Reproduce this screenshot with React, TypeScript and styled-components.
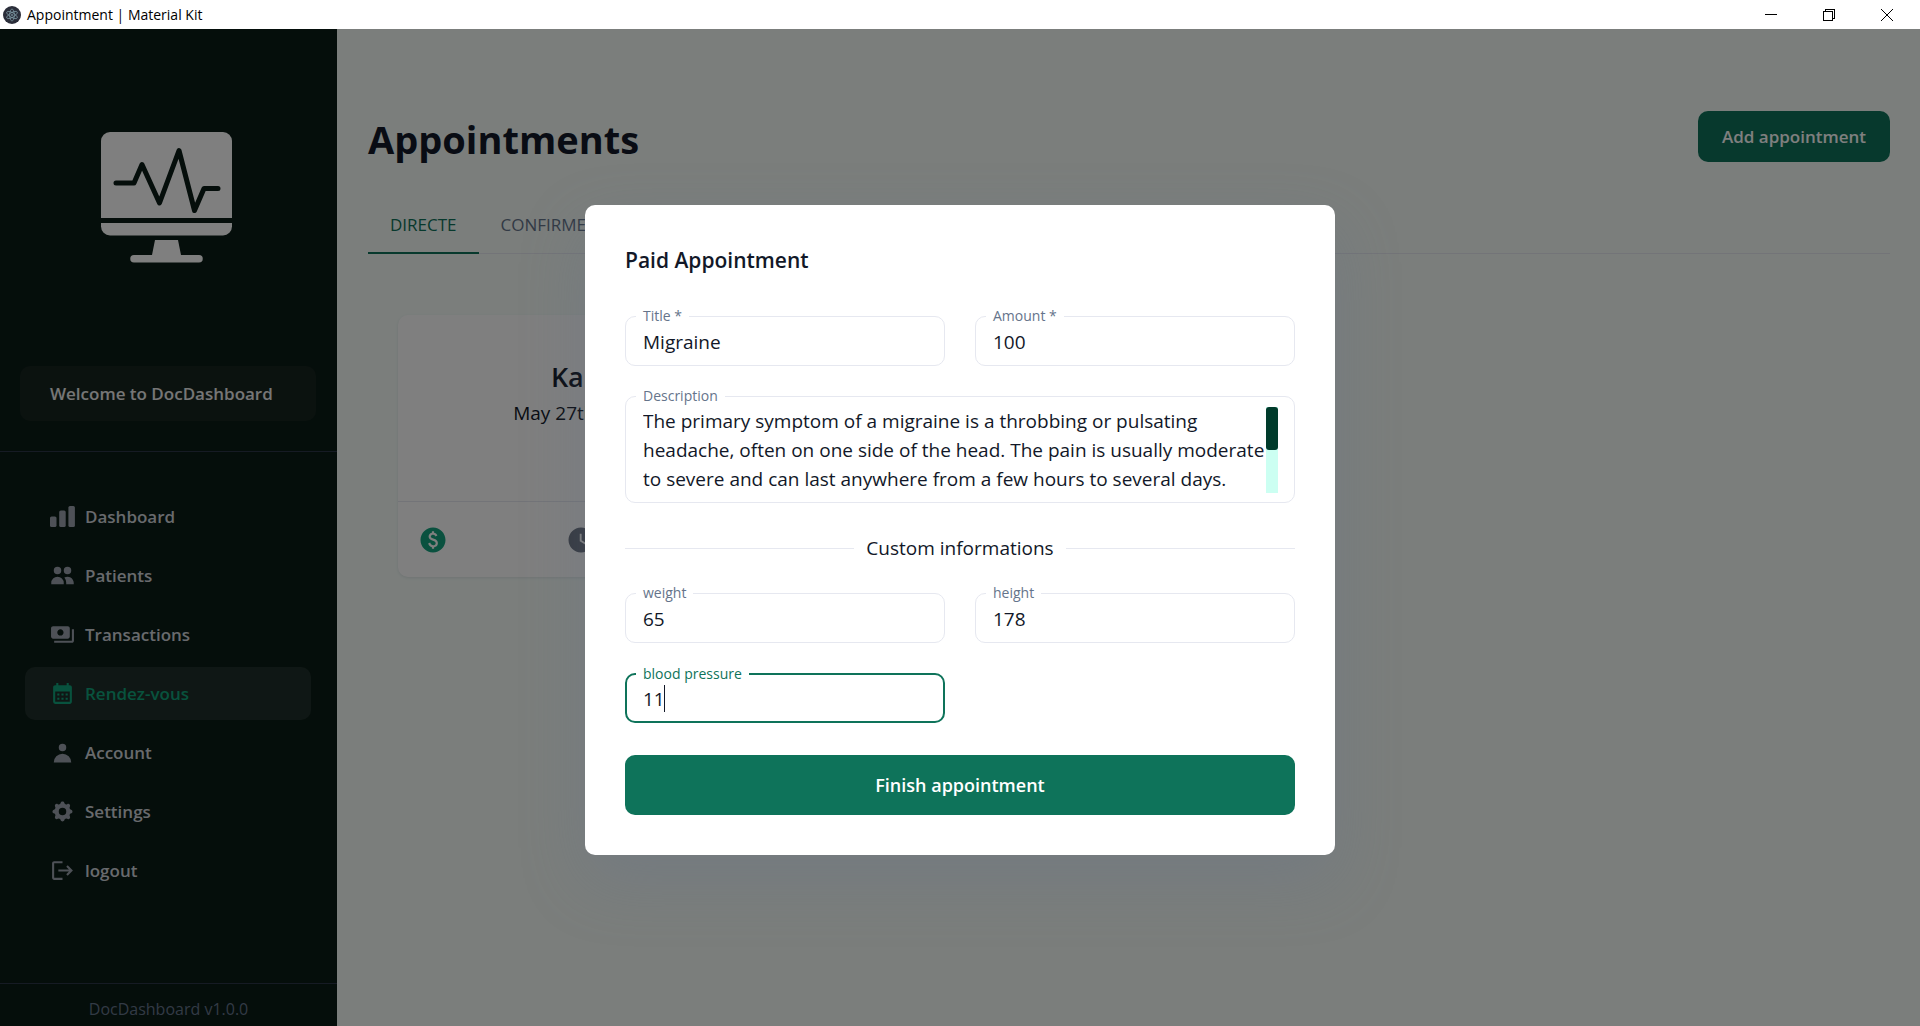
import React from 'react';
import styled, { createGlobalStyle } from 'styled-components';
import { HiUser, HiUsers, HiCog } from 'react-icons/hi';
import { MdCalendarMonth, MdLogout, MdPaid, MdPayments, MdWatchLater } from 'react-icons/md';

const color = {
  sidebar: '#0b1c16',
  page: '#f6fdf9',
  ink: '#121828',
  muted: '#65748b',
  line: '#e6e8f0',
  primary: '#0e735a',
};

const GlobalStyle = createGlobalStyle`
  *, *::before, *::after { box-sizing: border-box; }
  body {
    margin: 0;
    font-family: 'Open Sans', 'Noto Sans', sans-serif;
    color: ${color.ink};
  }
  button, input, textarea { font: inherit; color: inherit; }
  h1, h2, h3, p { margin: 0; }
`;

const Window = styled.div`
  display: flex;
  flex-direction: column;
  height: 100vh;
  overflow: hidden;
`;

const TitleBar = styled.header`
  display: flex;
  align-items: center;
  flex: none;
  height: 29px;
  padding: 0 4px 0 3px;
  background: #fff;
  color: #000;
  font-size: 14px;
`;

const WindowTitle = styled.span`
  flex: 1;
  margin-left: 6px;
`;

const WindowButton = styled.button`
  display: flex;
  align-items: center;
  justify-content: center;
  width: 58px;
  height: 29px;
  padding: 0;
  border: 0;
  background: none;
`;

const Body = styled.div`
  position: relative;
  display: flex;
  flex: 1;
  min-height: 0;
`;

const Sidebar = styled.aside`
  display: flex;
  flex-direction: column;
  flex: none;
  width: 337px;
  background: ${color.sidebar};
  color: #fff;
`;

const LogoLink = styled.a`
  display: flex;
  justify-content: center;
  padding: 103px 4px 103px 0;
`;

const Welcome = styled.div`
  margin: 0 21px 30px 20px;
  padding: 1px 30px 0;
  border-radius: 10px;
  background: #16241f;
  color: #ececec;
  font-size: 17px;
  font-weight: 600;
  line-height: 54px;
`;

const Nav = styled.nav`
  display: flex;
  flex: 1;
  flex-direction: column;
  gap: 6px;
  padding: 38px 26px 0 25px;
  border-top: 1px solid #2d3748;
`;

const NavLink = styled.a<{ $active?: boolean }>`
  display: flex;
  align-items: center;
  gap: 10px;
  height: 53px;
  padding: 0 25px;
  border-radius: 10px;
  background: ${(p) => (p.$active ? '#1f2f2a' : 'transparent')};
  color: ${(p) => (p.$active ? '#10a57c' : '#d1d5db')};
  font-size: 17px;
  font-weight: 600;
  text-decoration: none;

  svg {
    width: 25px;
    height: 25px;
    color: ${(p) => (p.$active ? '#10a57c' : '#9ca3af')};
  }
`;

const SidebarFooter = styled.footer`
  height: 43px;
  border-top: 1px solid #2d3748;
  color: #65748b;
  font-size: 16px;
  line-height: 50px;
  text-align: center;
`;

const Main = styled.main`
  flex: 1;
  min-width: 0;
  padding: 82px 30px 0 31px;
  background: ${color.page};
`;

const PageHeader = styled.div`
  display: flex;
  align-items: flex-start;
  justify-content: space-between;
`;

const PageTitle = styled.h1`
  font-size: 38px;
  font-weight: 700;
  line-height: 56px;
`;

const AddButton = styled.button`
  height: 51px;
  padding: 0 24px;
  border: 0;
  border-radius: 10px;
  background: ${color.primary};
  color: #fff;
  font-size: 17px;
  font-weight: 600;
`;

const Tabs = styled.div`
  display: flex;
  margin-top: 28px;
  border-bottom: 1px solid #e6e8f0;
`;

const Tab = styled.button<{ $selected?: boolean }>`
  height: 59px;
  margin-bottom: -1px;
  padding: 1px 22px 0;
  border: 0;
  border-bottom: 2px solid ${(p) => (p.$selected ? color.primary : 'transparent')};
  background: none;
  color: ${(p) => (p.$selected ? color.primary : color.muted)};
  font-size: 17px;
`;

const Cards = styled.div`
  display: grid;
  grid-template-columns: repeat(auto-fill, 366px);
  gap: 30px;
  padding: 61px 30px;
`;

const Card = styled.article`
  border-radius: 10px;
  background: #fff;
  box-shadow: 0 1px 3px rgba(100, 116, 139, 0.16);
`;

const CardBody = styled.div`
  height: 186px;
  padding-top: 42px;
  text-align: center;
`;

const PatientName = styled.h3`
  font-size: 27px;
  font-weight: 600;
  line-height: 40px;
`;

const VisitDate = styled.p`
  font-size: 19px;
  line-height: 32px;
`;

const CardActions = styled.div`
  display: flex;
  justify-content: space-between;
  padding: 23px 20px 22px;
  border-top: 1px solid ${color.line};
  svg { display: block; width: 30px; height: 30px; }
`;

const IconButton = styled.button<{ $color: string }>`
  padding: 0;
  border: 0;
  background: none;
  && { color: ${(p) => p.$color}; }
`;

const Overlay = styled.div`
  position: absolute;
  inset: 0;
  display: flex;
  align-items: center;
  justify-content: center;
  padding-top: 5px;
  background: rgba(0, 0, 0, 0.5);
`;

const Dialog = styled.form`
  display: flex;
  flex-direction: column;
  gap: 30px;
  width: 750px;
  padding: 40px;
  border-radius: 10px;
  background: #fff;
  box-shadow: 0 25px 64px rgba(100, 116, 139, 0.3);
`;

const DialogTitle = styled.h2`
  margin-bottom: 11px;
  font-size: 21px;
  font-weight: 600;
  line-height: 30px;
`;

const FieldGrid = styled.div`
  display: grid;
  grid-template-columns: 1fr 1fr;
  gap: 30px;
`;

const Field = styled.div<{ $focused?: boolean }>`
  position: relative;
  padding: ${(p) => (p.$focused ? '0 16px' : '1px 17px')};
  border: ${(p) => (p.$focused ? `2px solid ${color.primary}` : `1px solid ${color.line}`)};
  border-radius: 10px;

  label {
    left: ${(p) => (p.$focused ? '9px' : '10px')};
    color: ${(p) => (p.$focused ? color.primary : color.muted)};
  }
`;

const Label = styled.label`
  position: absolute;
  top: -11px;
  padding: 0 7px;
  background: #fff;
  font-size: 14px;
  line-height: 20px;
`;

const Input = styled.input`
  display: block;
  width: 100%;
  height: 46px;
  padding: 2px 0 0;
  border: 0;
  outline: 0;
  background: none;
  font-size: 19px;
`;

const Caret = styled.span`
  position: absolute;
  top: 10px;
  left: 37px;
  width: 1px;
  height: 27px;
  background: ${color.ink};
`;

const ScrollField = styled(Field)`
  display: flex;
  padding: 10px 16px 9px 17px;
`;

const TextArea = styled.textarea`
  display: block;
  flex: 1;
  min-width: 0;
  height: 86px;
  padding: 0;
  border: 0;
  outline: 0;
  resize: none;
  overflow: hidden;
  background: none;
  font-size: 19px;
  line-height: 29px;
`;

const ScrollTrack = styled.div`
  flex: none;
  width: 12px;
  background: #ccfff2;
`;

const ScrollThumb = styled.div`
  height: 50%;
  border-radius: 3px;
  background: #003b2b;
`;

const Divider = styled.div`
  display: flex;
  align-items: center;
  gap: 12px;
  font-size: 19px;
  line-height: 30px;

  &::before, &::after {
    content: '';
    flex: 1;
    border-top: 1px solid ${color.line};
  }
`;

const SubmitButton = styled.button`
  height: 60px;
  margin-top: 2px;
  border: 0;
  border-radius: 10px;
  background: ${color.primary};
  color: #fff;
  font-size: 18px;
  font-weight: 600;
`;

const ElectronIcon = () => (
  <svg width="18" height="18" viewBox="0 0 18 18" fill="none" aria-hidden="true">
    <circle cx="9" cy="9" r="9" fill="#2b2e3a" />
    <g stroke="#9fc4cf" strokeOpacity="0.7" strokeWidth="0.7">
      <ellipse cx="9" cy="9" rx="6" ry="2.3" transform="rotate(30 9 9)" />
      <ellipse cx="9" cy="9" rx="6" ry="2.3" transform="rotate(90 9 9)" />
      <ellipse cx="9" cy="9" rx="6" ry="2.3" transform="rotate(150 9 9)" />
    </g>
    <circle cx="9" cy="9" r="0.8" fill="#9fc4cf" />
  </svg>
);

const Logo = () => (
  <svg width="131" height="131" viewBox="0 0 131 131" aria-hidden="true">
    <path fill="#fff" d="M9 0h113a9 9 0 0 1 9 9v77H0V9a9 9 0 0 1 9-9z" />
    <path fill="#fff" d="M0 91h131v3.500a9 9 0 0 1-9 9H9a9 9 0 0 1-9-9z" />
    <path fill="#fff" d="M54 108h23l3 15h18a3.500 3.500 0 0 1 0 7.500H33a3.500 3.500 0 0 1 0-7.500h18z" />
    <path
      fill="none"
      stroke={color.sidebar}
      strokeWidth="5"
      strokeLinecap="round"
      strokeLinejoin="round"
      d="M15 51h18L41 32.500 58.500 71 78 18.500 93.500 78.500 103 56.500h14"
    />
  </svg>
);

const BarsIcon = () => (
  <svg viewBox="0 0 25 25" fill="currentColor" aria-hidden="true">
    <rect x="0" y="12.500" width="6.500" height="10.500" rx="1.600" />
    <rect x="9.200" y="6.500" width="6.500" height="16.500" rx="1.600" />
    <rect x="18.400" y="2" width="6.500" height="21" rx="1.600" />
  </svg>
);

const navItems = [
  { label: 'Dashboard', icon: <BarsIcon /> },
  { label: 'Patients', icon: <HiUsers /> },
  { label: 'Transactions', icon: <MdPayments /> },
  { label: 'Rendez-vous', icon: <MdCalendarMonth />, active: true },
  { label: 'Account', icon: <HiUser /> },
  { label: 'Settings', icon: <HiCog /> },
  { label: 'logout', icon: <MdLogout /> },
];

const description =
  'The primary symptom of a migraine is a throbbing or pulsating headache, often on one side of the head. ' +
  'The pain is usually moderate to severe and can last anywhere from a few hours to several days.';

export default function App() {
  return (
    <Window>
      <GlobalStyle />
      <TitleBar>
        <ElectronIcon />
        <WindowTitle>Appointment | Material Kit</WindowTitle>
        <WindowButton aria-label="Minimize">
          <svg width="12" height="12" stroke="#000" shapeRendering="crispEdges">
            <path d="M0 5.500h12" />
          </svg>
        </WindowButton>
        <WindowButton aria-label="Restore">
          <svg width="12" height="12" stroke="#000" fill="none" shapeRendering="crispEdges">
            <path d="M.5 2.500h9v9h-9zM2.500 2.500v-2h9v9h-2" />
          </svg>
        </WindowButton>
        <WindowButton aria-label="Close">
          <svg width="12" height="12" stroke="#000">
            <path d="M0 0l12 12M12 0L0 12" />
          </svg>
        </WindowButton>
      </TitleBar>

      <Body>
        <Sidebar>
          <LogoLink href="#" aria-label="Home">
            <Logo />
          </LogoLink>
          <Welcome>Welcome to DocDashboard</Welcome>
          <Nav>
            {navItems.map((item) => (
              <NavLink key={item.label} href="#" $active={item.active}>
                {item.icon}
                {item.label}
              </NavLink>
            ))}
          </Nav>
          <SidebarFooter>DocDashboard v1.0.0</SidebarFooter>
        </Sidebar>

        <Main>
          <PageHeader>
            <PageTitle>Appointments</PageTitle>
            <AddButton>Add appointment</AddButton>
          </PageHeader>
          <Tabs role="tablist">
            <Tab role="tab" aria-selected="true" $selected>
              DIRECTE
            </Tab>
            <Tab role="tab">CONFIRMED</Tab>
          </Tabs>
          <Cards>
            <Card>
              <CardBody>
                <PatientName>Kara</PatientName>
                <VisitDate>May 27th, 2023</VisitDate>
              </CardBody>
              <CardActions>
                <IconButton $color="#14a37f" aria-label="Payment">
                  <MdPaid />
                </IconButton>
                <IconButton $color="#6b7280" aria-label="Postpone">
                  <MdWatchLater />
                </IconButton>
                <IconButton $color="#6b7280" aria-label="Reschedule">
                  <MdCalendarMonth />
                </IconButton>
              </CardActions>
            </Card>
          </Cards>
        </Main>

        <Overlay>
          <Dialog role="dialog" aria-labelledby="dialog-title" onSubmit={(e) => e.preventDefault()}>
            <DialogTitle id="dialog-title">Paid Appointment</DialogTitle>
            <FieldGrid>
              <Field>
                <Label htmlFor="title">Title *</Label>
                <Input id="title" defaultValue="Migraine" />
              </Field>
              <Field>
                <Label htmlFor="amount">Amount *</Label>
                <Input id="amount" defaultValue="100" />
              </Field>
            </FieldGrid>
            <ScrollField>
              <Label htmlFor="description">Description</Label>
              <TextArea id="description" defaultValue={description} />
              <ScrollTrack>
                <ScrollThumb />
              </ScrollTrack>
            </ScrollField>
            <Divider>Custom informations</Divider>
            <FieldGrid>
              <Field>
                <Label htmlFor="weight">weight</Label>
                <Input id="weight" defaultValue="65" />
              </Field>
              <Field>
                <Label htmlFor="height">height</Label>
                <Input id="height" defaultValue="178" />
              </Field>
              <Field $focused>
                <Label htmlFor="pressure">blood pressure</Label>
                <Input id="pressure" defaultValue="11" />
                <Caret />
              </Field>
            </FieldGrid>
            <SubmitButton type="submit">Finish appointment</SubmitButton>
          </Dialog>
        </Overlay>
      </Body>
    </Window>
  );
}
